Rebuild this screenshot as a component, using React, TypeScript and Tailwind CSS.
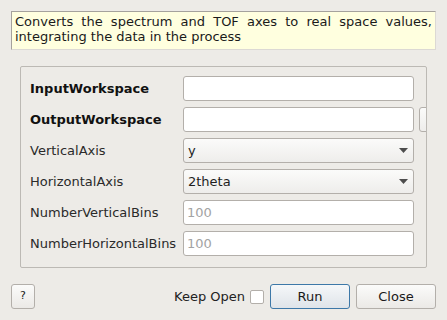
const font = { fontFamily: '"DejaVu Sans", "Liberation Sans", sans-serif' };

function TextField({ placeholder }: { placeholder?: string }) {
  return (
    <div className="w-[231px] h-[25px] shrink-0 bg-white border border-[#b3afaa] rounded-[3px] flex items-center px-[3px] text-[#a3a3a3]">
      {placeholder}
    </div>
  );
}

function Combo({ value }: { value: string }) {
  return (
    <div className="w-[231px] h-[25px] shrink-0 border border-[#b3afaa] rounded-[3px] bg-gradient-to-b from-[#fbfbfa] to-[#eeedeb] flex items-center justify-between pl-[4px] pr-[5px] text-[#1e1e1e]">
      <span>{value}</span>
      <svg width="9" height="5" viewBox="0 0 9 5">
        <path d="M0 0 H9 L4.5 5 Z" fill="#4d4d4d" />
      </svg>
    </div>
  );
}

const rows: { label: string; bold?: boolean; kind: 'text' | 'combo'; value?: string; extra?: boolean }[] = [
  { label: 'InputWorkspace', bold: true, kind: 'text' },
  { label: 'OutputWorkspace', bold: true, kind: 'text', extra: true },
  { label: 'VerticalAxis', kind: 'combo', value: 'y' },
  { label: 'HorizontalAxis', kind: 'combo', value: '2theta' },
  { label: 'NumberVerticalBins', kind: 'text', value: '100' },
  { label: 'NumberHorizontalBins', kind: 'text', value: '100' },
];

export default function App() {
  return (
    <div
      className="w-[447px] h-[320px] bg-[#edebe7] overflow-hidden flex flex-col text-[13px] text-[#222]"
      style={font}
    >
      {/* Description */}
      <div className="mx-[11px] mt-[11px] h-[39px] bg-[#ffffdf] border border-[#a5a29d] border-r-[#dcd9d4] border-b-[#dcd9d4] px-[3px] pt-[2px] leading-[15px] text-[#1a1a1a] text-justify">
        Converts the spectrum and TOF axes to real space values, integrating the data in the process
      </div>

      {/* Properties */}
      <div className="ml-[20px] mt-[16px] w-[407px] h-[202px] border border-[#bcb9b4] rounded-[2px]">
        <div className="w-full h-full overflow-hidden flex flex-col gap-[6px] pt-[9px] pl-[9px]">
          {rows.map((r) => (
            <div key={r.label} className="flex items-center h-[25px]">
              <div className={`w-[153px] shrink-0 ${r.bold ? 'font-bold text-[#111]' : 'text-[#2a2a2a]'}`}>
                {r.label}
              </div>
              {r.kind === 'combo' ? (
                <Combo value={r.value ?? ''} />
              ) : (
                <TextField placeholder={r.value} />
              )}
              {r.extra && (
                <div className="ml-[5px] w-[20px] h-[25px] shrink-0 border border-[#b3afaa] rounded-[3px] bg-gradient-to-b from-[#fbfbfa] to-[#eeedeb]" />
              )}
            </div>
          ))}
        </div>
      </div>

      {/* Buttons */}
      <div className="flex items-center mt-[16px] pl-[11px] pr-[11px]">
        <button className="w-[24px] h-[25px] border border-[#b3afaa] rounded-[3px] bg-gradient-to-b from-[#fbfbfa] to-[#ebe9e6] text-[11px] text-[#222] flex items-center justify-center">
          ?
        </button>
        <div className="flex-1" />
        <span className="text-[#222]">Keep Open</span>
        <div className="ml-[5px] w-[14px] h-[14px] bg-white border border-[#b3afaa] rounded-[2px]" />
        <button className="ml-[6px] w-[80px] h-[25px] border border-[#3d78a8] rounded-[3px] bg-gradient-to-b from-[#f5f7f9] to-[#dfe4e9] text-[#1a1a1a] flex items-center justify-center">
          Run
        </button>
        <button className="ml-[6px] w-[80px] h-[25px] border border-[#b3afaa] rounded-[3px] bg-gradient-to-b from-[#fbfbfa] to-[#ebe9e6] text-[#1a1a1a] flex items-center justify-center">
          Close
        </button>
      </div>
    </div>
  );
}
